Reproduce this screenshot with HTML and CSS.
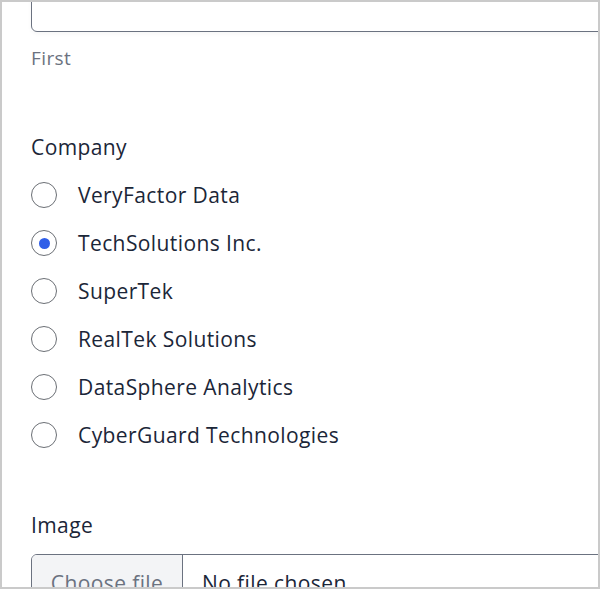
FILE: index.html
```html
<!DOCTYPE html>
<html>
<head>
<meta charset="utf-8">
<link rel="stylesheet" href="styles.css">
</head>
<body>
<div class="frame">
  <div class="content">
    <div class="text-input"></div>
    <p class="help">First</p>

    <div class="group">
      <div class="label">Company</div>
      <div class="radios">
        <div class="row"><span class="radio"></span><span class="opt">VeryFactor Data</span></div>
        <div class="row"><span class="radio checked"></span><span class="opt">TechSolutions Inc.</span></div>
        <div class="row"><span class="radio"></span><span class="opt">SuperTek</span></div>
        <div class="row"><span class="radio"></span><span class="opt">RealTek Solutions</span></div>
        <div class="row"><span class="radio"></span><span class="opt">DataSphere Analytics</span></div>
        <div class="row"><span class="radio"></span><span class="opt">CyberGuard Technologies</span></div>
      </div>
    </div>

    <div class="group image-group">
      <div class="label">Image</div>
      <div class="file">
        <span class="file-btn">Choose file</span>
        <span class="file-name">No file chosen</span>
      </div>
    </div>
  </div>
</div>
</body>
</html>
```

FILE: styles.css
```css
html, body {
  margin: 0;
  padding: 0;
  background: #ffffff;
}

.frame {
  width: 600px;
  height: 589px;
  box-sizing: border-box;
  border: 2px solid #cacaca;
  overflow: hidden;
  font-family: "Open Sans", "Noto Sans", sans-serif;
  color: #1b2638;
  letter-spacing: 0.4px;
}

.content {
  width: 640px;
  padding-left: 29px;
}

.text-input {
  height: 44px;
  margin-top: -14px;
  border: 1px solid #6b7280;
  border-radius: 6px;
  box-sizing: border-box;
  box-shadow: 0 2px 4px rgba(0, 0, 0, 0.04);
}

.help {
  margin: 12px 0 0;
  font-size: 19px;
  line-height: 28px;
  color: #6b7280;
}

.group {
  margin-top: 61px;
}

.label {
  font-size: 21px;
  line-height: 28px;
}

.radios {
  margin-top: 10px;
  display: flex;
  flex-direction: column;
}

.row {
  height: 48px;
  display: flex;
  align-items: center;
  gap: 21px;
}

.radio {
  width: 26px;
  height: 26px;
  box-sizing: border-box;
  border: 1.5px solid #6b6f75;
  border-radius: 50%;
  display: flex;
  align-items: center;
  justify-content: center;
  flex-shrink: 0;
}

.radio.checked::after {
  content: "";
  width: 11px;
  height: 11px;
  border-radius: 50%;
  background: #2f5ee8;
}

.opt {
  font-size: 21px;
  line-height: 28px;
}

.image-group {
  margin-top: 52px;
}

.file {
  margin-top: 15px;
  height: 56px;
  display: flex;
  border: 1px solid #6b7280;
  border-radius: 6px;
  overflow: hidden;
}

.file-btn {
  width: 150px;
  background: #f3f4f6;
  border-right: 1px solid #6b7280;
  color: #6b7280;
  font-size: 21px;
  display: flex;
  align-items: center;
  justify-content: center;
}

.file-name {
  padding-left: 19px;
  font-size: 21px;
  display: flex;
  align-items: center;
}
```
